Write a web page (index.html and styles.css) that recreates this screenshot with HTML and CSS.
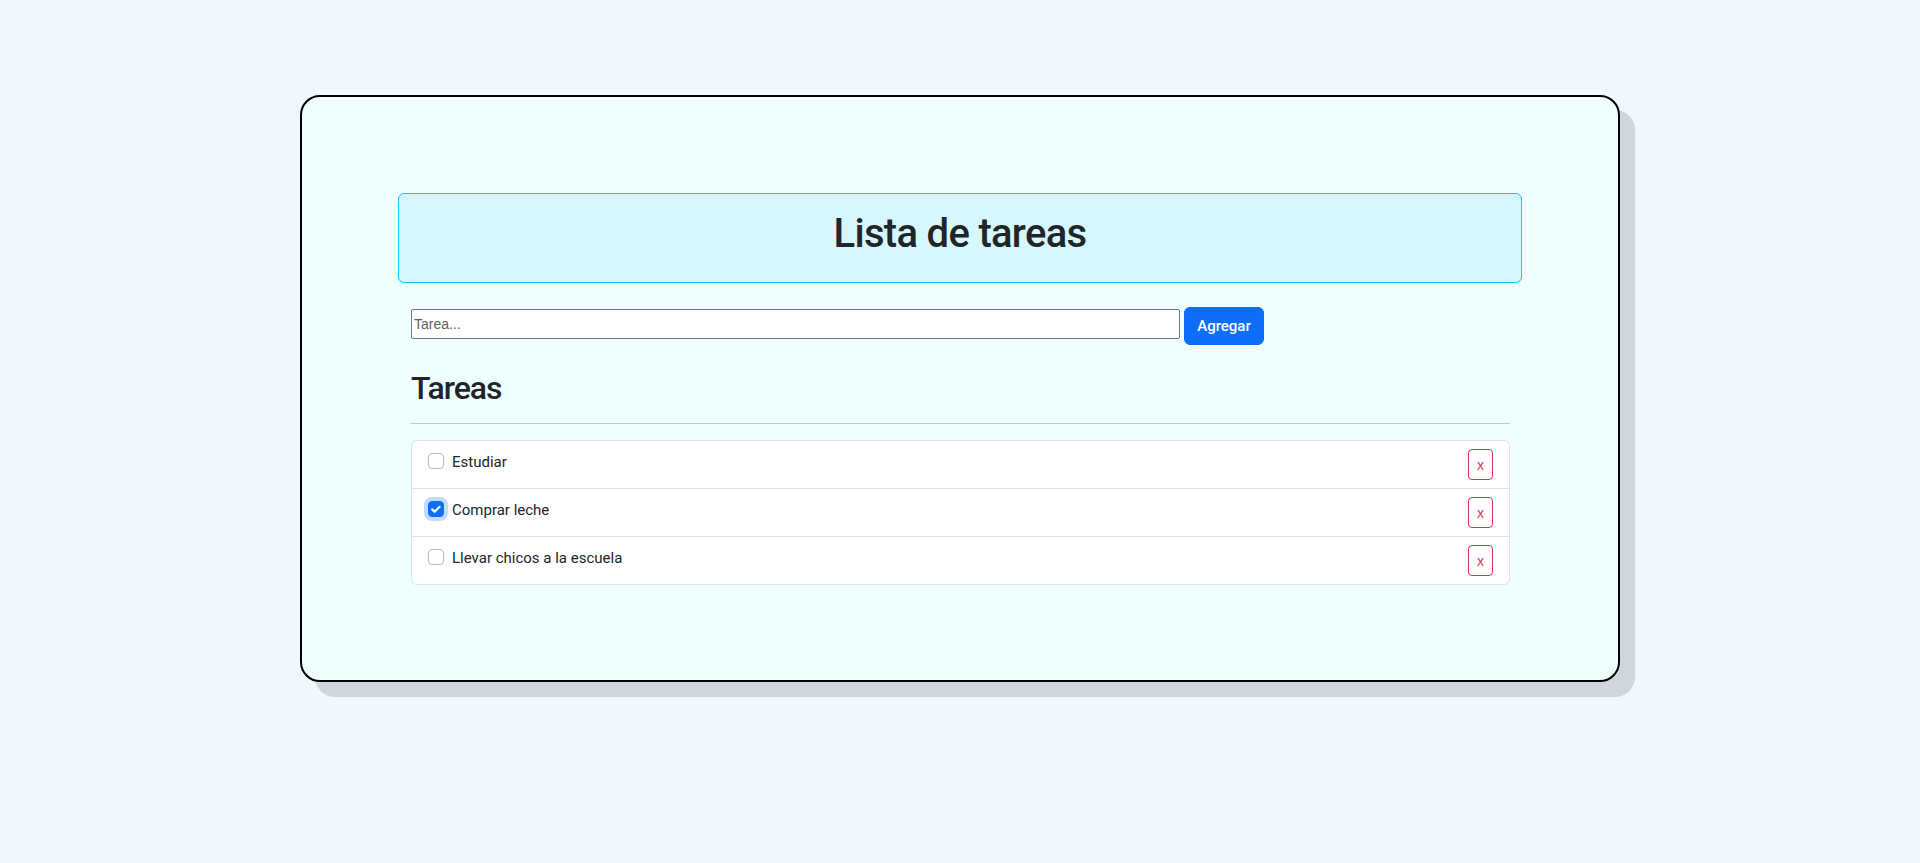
FILE: index.html
```html
<!DOCTYPE html>
<html lang="es">
<head>
<meta charset="utf-8">
<title>Lista de tareas</title>
<link rel="stylesheet" href="styles.css">
</head>
<body>
<main class="card">
  <header class="title-box">
    <h1>Lista de tareas</h1>
  </header>
  <section class="content">
    <form class="add-row">
      <input class="task-input" type="text" placeholder="Tarea...">
      <button class="btn-add" type="button">Agregar</button>
    </form>
    <h2 class="section-title">Tareas</h2>
    <hr class="divider">
    <ul class="list">
      <li class="item">
        <label class="item-left"><span class="check"></span><span>Estudiar</span></label>
        <button class="btn-del" type="button">x</button>
      </li>
      <li class="item">
        <label class="item-left"><span class="check checked"><svg viewBox="0 0 16 16" width="16" height="16"><path d="M4.2 8.4l2.4 2.4 5-5" fill="none" stroke="#fff" stroke-width="2.2" stroke-linecap="round" stroke-linejoin="round"/></svg></span><span>Comprar leche</span></label>
        <button class="btn-del" type="button">x</button>
      </li>
      <li class="item">
        <label class="item-left"><span class="check"></span><span>Llevar chicos a la escuela</span></label>
        <button class="btn-del" type="button">x</button>
      </li>
    </ul>
  </section>
</main>
</body>
</html>
```

FILE: styles.css
```css
* { box-sizing: border-box; }

html { min-height: 100%; background: #eff7ff; }

body {
  margin: 0;
  padding: 95px 0 120px;
  min-height: 100vh;
  background: #eff7ff;
  font-family: Roboto, "Liberation Sans", Arial, sans-serif;
  color: #212529;
}

.card {
  width: 1320px;
  margin: 0 auto;
  background: #effeff;
  border: 2px solid #000;
  border-radius: 20px;
  box-shadow: 15px 15px 0 #cfd6de;
  padding: 96px 96px 95px;
}

.title-box {
  background: #d6f8fd;
  border: 1px solid #0dcaf0;
  border-radius: 6px;
  padding: 16px;
  text-align: center;
}

.title-box h1 {
  margin: 0 0 8px;
  font-size: 40px;
  line-height: 48px;
  font-weight: 500;
  letter-spacing: -0.7px;
}

.content {
  padding: 0 12px 0 13px;
}

.add-row {
  display: flex;
  align-items: flex-start;
  gap: 4px;
  margin-top: 24px;
}

.task-input {
  width: 769px;
  height: 30px;
  margin-top: 2px;
  border: 1px solid #767676;
  border-radius: 2px;
  padding: 1px 2px;
  background: #fff;
  font-family: "Liberation Sans", Arial, sans-serif;
  font-size: 14px;
}

.task-input::placeholder { color: #5f5f5f; }

.btn-add {
  height: 38px;
  width: 80px;
  padding: 0;
  border: 1px solid #0d6efd;
  border-radius: 6px;
  background: #0d6efd;
  color: #fff;
  font-family: Roboto, "Liberation Sans", sans-serif;
  font-size: 15px;
  font-weight: 500;
}

.section-title {
  margin: 24px 0 0;
  font-size: 32px;
  line-height: 38px;
  font-weight: 500;
  letter-spacing: -1px;
}

.divider {
  margin: 16px 0;
  border: 0;
  border-top: 1px solid #bfcbcc;
}

.list {
  list-style: none;
  margin: 0;
  padding: 0;
  background: #fff;
  border: 1px solid #dee2e6;
  border-radius: 6px;
}

.item {
  display: flex;
  justify-content: space-between;
  padding: 8px 16px;
}

.item + .item { border-top: 1px solid #dee2e6; }

.item-left {
  display: flex;
  align-items: flex-start;
  font-size: 15px;
  line-height: 24px;
  padding-top: 1px;
}

.check {
  width: 16px;
  height: 16px;
  margin: 3px 8px 0 0;
  border: 1px solid #bdbdbd;
  border-radius: 4px;
  background: #fff;
  display: flex;
}

.check.checked {
  background: #0d6efd;
  border-color: #0d6efd;
  box-shadow: 0 0 0 4px rgba(13, 110, 253, 0.25);
}

.check svg { margin: -1px; }

.btn-del {
  width: 25px;
  height: 31px;
  padding: 0;
  border: 1px solid #dc3545;
  border-radius: 4px;
  background: #fff;
  color: #dc3545;
  font-family: "Liberation Sans", Arial, sans-serif;
  font-size: 14px;
}
```
